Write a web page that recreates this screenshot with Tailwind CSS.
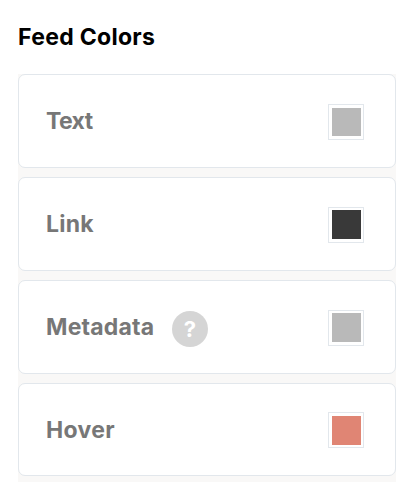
<!DOCTYPE html>
<html lang="en">
<head>
  <meta charset="utf-8">
  <title>Feed Colors</title>
  <script src="https://cdn.jsdelivr.net/npm/@tailwindcss/browser@4"></script>
</head>
<body class="bg-white font-['Inter',sans-serif] font-bold h-[482px] overflow-hidden">
  <div class="w-[378px] ml-[18px] pt-[21px]">
    <h2 class="h-[53px] text-[23px] leading-8 text-black whitespace-nowrap"><span class="tracking-[0.3px]">Feed Colors</span></h2>

    <!-- Color rows -->
    <div class="flex flex-col gap-[9px] bg-[#f9f8f7] h-[408px]">
      <div class="flex items-start justify-between h-[94px] pl-[27px] pr-[31px] pt-[29px] bg-white border border-[#e2e7ec] rounded-[7px]">
        <span class="-mt-px text-[23px] leading-9 tracking-[-0.6px] text-[#777]">Text</span>
        <div class="w-9 h-9 p-[3px] pr-[2px] border border-[#e2e7ec]"><div class="h-7 bg-[#b9b9b9]"></div></div>
      </div>

      <div class="flex items-start justify-between h-[94px] pl-[27px] pr-[31px] pt-[29px] bg-white border border-[#e2e7ec] rounded-[7px]">
        <span class="-mt-px text-[23px] leading-9 tracking-[0.2px] text-[#777]">Link</span>
        <div class="w-9 h-9 p-[2px] pl-[3px] border border-[#e2e7ec]"><div class="h-[29px] bg-[#393939]"></div></div>
      </div>

      <div class="flex items-start justify-between h-[94px] pl-[27px] pr-[31px] pt-[29px] bg-white border border-[#e2e7ec] rounded-[7px]">
        <div class="flex items-start">
          <span class="-mt-px w-[126px] text-[23px] leading-9 tracking-[0.2px] text-[#777]">Metadata</span>
          <span class="flex justify-center w-9 h-9 mt-px rounded-full bg-[#d5d5d5] text-[22px] leading-9 text-white">?</span>
        </div>
        <div class="w-9 h-9 p-[2px] pl-[3px] border border-[#e2e7ec]"><div class="h-[29px] bg-[#b9b9b9]"></div></div>
      </div>

      <div class="flex items-start justify-between h-[93px] pl-[27px] pr-[31px] pt-[28px] bg-white border border-[#e2e7ec] rounded-[7px]">
        <span class="text-[23px] leading-9 tracking-[0.3px] text-[#777]">Hover</span>
        <div class="w-9 h-9 p-[3px] pr-[2px] border border-[#e2e7ec]"><div class="h-[29px] bg-[#e08574]"></div></div>
      </div>
    </div>
  </div>
</body>
</html>
